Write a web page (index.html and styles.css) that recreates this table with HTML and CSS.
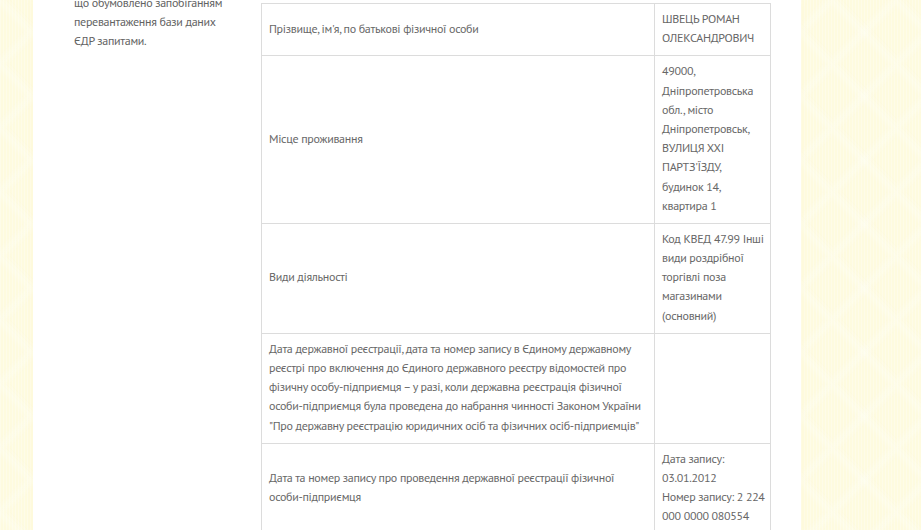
FILE: index.html
```html
<!DOCTYPE html>
<html lang="uk">
<head>
  <meta charset="UTF-8">
  <meta name="viewport" content="width=device-width, initial-scale=1.0">
  <title>ФОП ШВЕЦЬ РОМАН ОЛЕКСАНДРОВИЧ</title>
  <link rel="stylesheet" href="styles.css">
</head>

<body>

  <div class="page">
    <aside class="sidebar">
      <p>що обумовлено запобіганням перевантаження бази даних ЄДР запитами.</p>
    </aside>

    <main class="content">
      <table class="info-table">
        <tr>
          <td class="label">Прізвище, ім'я, по батькові фізичної особи</td>
          <td class="value">ШВЕЦЬ РОМАН ОЛЕКСАНДРОВИЧ</td>
        </tr>
        <tr>
          <td class="label">Місце проживання</td>
          <td class="value">49000, Дніпропетровська обл., місто Дніпропетровськ, ВУЛИЦЯ ХХІ ПАРТЗ'ЇЗДУ, будинок&nbsp;14, квартира&nbsp;1</td>
        </tr>
        <tr>
          <td class="label">Види діяльності</td>
          <td class="value">Код КВЕД 47.99 Інші види роздрібної торгівлі поза магазинами (основний)</td>
        </tr>
        <tr>
          <td class="label">Дата державної реєстрації, дата та номер запису в Єдиному державному реєстрі про включення до Єдиного державного реєстру відомостей про фізичну <span class="nowrap">особу-підприємця</span> – у разі, коли державна реєстрація фізичної <span class="nowrap">особи-підприємця</span> була проведена до набрання чинності Законом України "Про державну реєстрацію юридичних осіб та фізичних <span class="nowrap">осіб-підприємців"</span></td>
          <td class="value"></td>
        </tr>
        <tr>
          <td class="label">Дата та номер запису про проведення державної реєстрації фізичної <span class="nowrap">особи-підприємця</span></td>
          <td class="value">Дата запису: 03.01.2012<br>Номер запису: 2 224 000 0000 080554</td>
        </tr>
      </table>
    </main>
  </div>

</body>
</html>
```

FILE: styles.css
```css
/* General Reset */
* {
  margin: 0;
  padding: 0;
  box-sizing: border-box;
}

body {
  font-family: 'PT Sans', Roboto, sans-serif;
  font-size: 12px;
  line-height: 1.6;
  letter-spacing: -0.3px;
  color: #676767;
  background-color: #fefbdf;
  background-image:
    repeating-linear-gradient(90deg, rgba(255, 255, 255, 0.3) 0 1px, transparent 1px 3px),
    linear-gradient(45deg, transparent 42%, rgba(255, 255, 255, 0.25) 50%, transparent 58%),
    linear-gradient(-45deg, transparent 42%, rgba(255, 255, 255, 0.25) 50%, transparent 58%);
  background-size: auto, 64px 64px, 64px 64px;
  overflow: hidden;
}

.nowrap {
  white-space: nowrap;
}

/* Page */
.page {
  display: flex;
  width: 768px;
  min-height: 530px;
  margin-left: 33px;
  padding: 0 30px 0 41px;
  background: #fff;
  box-shadow: 0 0 6px rgba(255, 250, 215, 0.9);
}

.sidebar {
  width: 187px;
  flex-shrink: 0;
  padding-right: 24px;
}

.sidebar p {
  margin-top: -7px;
  color: #626262;
}

.content {
  width: 510px;
  padding-top: 3px;
}

/* Table */
.info-table {
  width: 100%;
  border-collapse: collapse;
}

.info-table td {
  border: 1px solid #dcdcdc;
  padding: 5px 2px 8px 7px;
  vertical-align: middle;
}

.info-table .label {
  width: 394px;
}

.info-table .value {
  width: 116px;
}
```
